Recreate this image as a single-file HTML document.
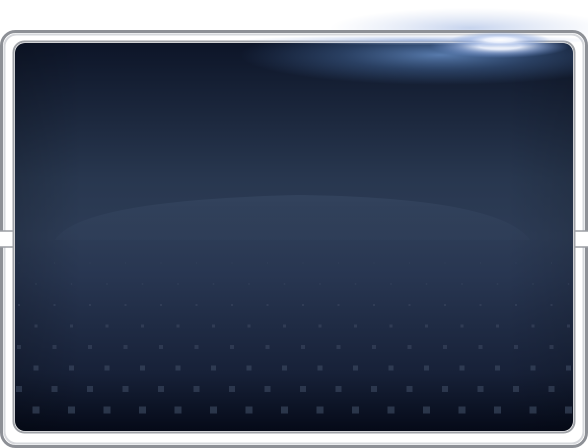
<!DOCTYPE html>
<html><head><style>
html,body{margin:0;padding:0;background:#fff;width:588px;height:448px;overflow:hidden}
svg{display:block}
</style></head><body>
<svg width="588" height="448" viewBox="0 0 588 448" xmlns="http://www.w3.org/2000/svg">
<defs>
<linearGradient id="bg" x1="0" y1="0" x2="0" y2="1">
<stop offset="0" stop-color="#0d1528"/>
<stop offset="0.35" stop-color="#28374f"/>
<stop offset="0.5" stop-color="#2d3c56"/>
<stop offset="0.6" stop-color="#283651"/>
<stop offset="0.85" stop-color="#172138"/>
<stop offset="1" stop-color="#050a18"/>
</linearGradient>
<linearGradient id="side" x1="0" y1="0" x2="1" y2="0">
<stop offset="0" stop-color="#000" stop-opacity="0.15"/>
<stop offset="0.12" stop-color="#000" stop-opacity="0"/>
<stop offset="0.88" stop-color="#000" stop-opacity="0"/>
<stop offset="1" stop-color="#000" stop-opacity="0.12"/>
</linearGradient>
<radialGradient id="glow" cx="0.5" cy="0.5" r="0.5">
<stop offset="0" stop-color="#ffffff" stop-opacity="1"/>
<stop offset="0.3" stop-color="#eef3ff" stop-opacity="0.95"/>
<stop offset="0.6" stop-color="#9fb7e6" stop-opacity="0.6"/>
<stop offset="1" stop-color="#6b8fd0" stop-opacity="0"/>
</radialGradient>
<radialGradient id="glow2" cx="0.5" cy="0.5" r="0.5">
<stop offset="0" stop-color="#6a93cc" stop-opacity="0.8"/>
<stop offset="0.5" stop-color="#4f78b0" stop-opacity="0.4"/>
<stop offset="1" stop-color="#4f78b0" stop-opacity="0"/>
</radialGradient>
<radialGradient id="glow3" cx="0.5" cy="0.5" r="0.5">
<stop offset="0" stop-color="#9ab2e0" stop-opacity="0.8"/>
<stop offset="1" stop-color="#b8c8ea" stop-opacity="0"/>
</radialGradient>
<linearGradient id="hump" x1="0" y1="0" x2="0" y2="1">
<stop offset="0" stop-color="#3a4b66" stop-opacity="0.55"/>
<stop offset="1" stop-color="#34445e" stop-opacity="0.2"/>
</linearGradient>
<clipPath id="panel"><rect x="15" y="43" width="558" height="388" rx="10"/></clipPath>
</defs>
<ellipse cx="470" cy="28" rx="140" ry="20" fill="url(#glow3)" opacity="0.7"/>
<rect x="1.5" y="31.5" width="585" height="415" rx="14" fill="#fff" stroke="#8d9096" stroke-width="3"/>
<rect x="4.5" y="34.5" width="579" height="409" rx="12" fill="none" stroke="#d6d8dc" stroke-width="2"/>
<rect x="0" y="231" width="14" height="16" fill="#fff"/>
<rect x="574" y="231" width="14" height="16" fill="#fff"/>
<line x1="0" y1="231" x2="14" y2="231" stroke="#9a9da3" stroke-width="1.5"/>
<line x1="0" y1="247" x2="14" y2="247" stroke="#9a9da3" stroke-width="1.5"/>
<line x1="574" y1="231" x2="588" y2="231" stroke="#9a9da3" stroke-width="1.5"/>
<line x1="574" y1="247" x2="588" y2="247" stroke="#9a9da3" stroke-width="1.5"/>
<rect x="13.5" y="41.5" width="561" height="391" rx="11" fill="none" stroke="#a0a3a8" stroke-width="2"/>
<g clip-path="url(#panel)">
<rect x="15" y="43" width="558" height="388" fill="url(#bg)"/>
<rect x="15" y="43" width="558" height="388" fill="url(#side)"/>
<path d="M55 240 Q80 200 300 195 Q500 198 530 240 Z" fill="url(#hump)"/>
<g id="dots"></g>
<ellipse cx="440" cy="55" rx="200" ry="30" fill="url(#glow2)"/>
<ellipse cx="500" cy="46" rx="70" ry="12" fill="url(#glow)"/>
</g>
<ellipse cx="420" cy="40" rx="180" ry="5" fill="url(#glow3)"/>
<ellipse cx="500" cy="40" rx="50" ry="8" fill="url(#glow)"/>
</svg>
<script>
(function(){
var g=document.getElementById('dots');
var rows=[[263,1,19,0.35],[284,1.4,36,0.4],[305,2,19,0.4],[326,3,36,0.45],[347,4,19,0.45],[368,5,36,0.5],[389,6,19,0.5],[410,7,36,0.55]];
var s='';
rows.forEach(function(r){
for(var x=r[2];x<575;x+=35.5){
s+='<rect x="'+(x-r[1]/2)+'" y="'+(r[0]-r[1]/2)+'" width="'+r[1]+'" height="'+r[1]+'" fill="#46536b" opacity="'+r[3]+'"/>';
}});
g.innerHTML=s;
})();
</script>
</body></html>
